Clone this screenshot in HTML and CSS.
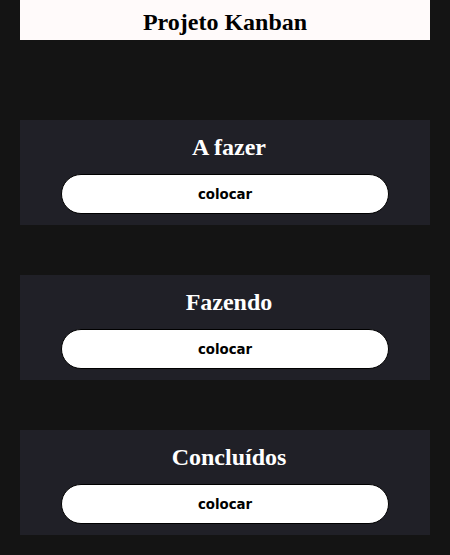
FILE: index.html
```html
<!DOCTYPE html>
<html lang="pt">
<head>
<meta charset="utf-8">
<title>Projeto Kanban</title>
<link rel="stylesheet" href="styles.css">
</head>
<body>
<header class="header"><h1 class="title">Projeto Kanban</h1></header>
<main class="board">
  <section class="column">
    <h2 class="column-title">A fazer</h2>
    <button class="add-btn">colocar</button>
  </section>
  <section class="column">
    <h2 class="column-title">Fazendo</h2>
    <button class="add-btn">colocar</button>
  </section>
  <section class="column">
    <h2 class="column-title">Concluídos</h2>
    <button class="add-btn">colocar</button>
  </section>
</main>
</body>
</html>
```
FILE: styles.css
```css
html, body {
  margin: 0;
  padding: 0;
}
body {
  background: #141414;
  padding: 0 20px;
  font-family: "Liberation Serif", "Times New Roman", serif;
}
.header {
  background: #fffafa;
  height: 40px;
  box-sizing: border-box;
  padding-top: 9px;
  text-align: center;
}
.title {
  margin: 0;
  font-size: 24px;
  font-weight: bold;
  line-height: normal;
  color: #000;
}
.board {
  display: flex;
  flex-direction: column;
  gap: 50px;
  padding-top: 80px;
}
.column {
  background: #202027;
  height: 105px;
  box-sizing: border-box;
  padding: 13px 0 11px;
  display: flex;
  flex-direction: column;
  align-items: center;
  gap: 13px;
}
.column-title {
  margin: 0;
  padding-left: 8px;
  font-size: 24px;
  line-height: 28px;
  font-weight: bold;
  color: #fff;
}
.add-btn {
  width: 80%;
  height: 40px;
  background: #fff;
  border: 1px solid #000;
  border-radius: 20px;
  font-family: "DejaVu Sans", Verdana, sans-serif;
  font-size: 13.333px;
  font-weight: bold;
  color: #000;
  padding: 0;
}
```
